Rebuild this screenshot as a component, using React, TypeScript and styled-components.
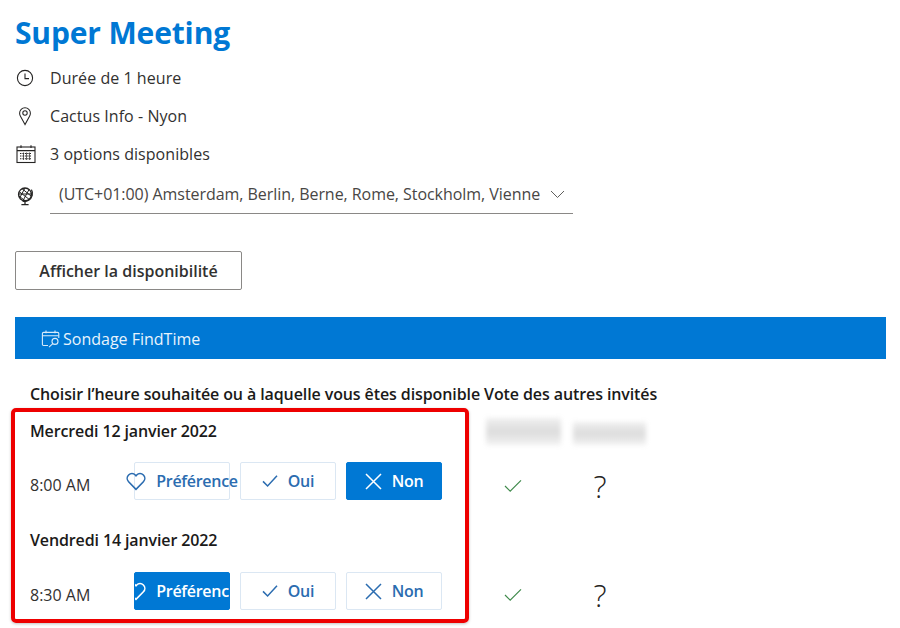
import React from "react";
import styled, { createGlobalStyle } from "styled-components";

const GlobalStyle = createGlobalStyle`
  html, body {
    margin: 0;
    padding: 0;
    background: #fff;
    font-family: "Open Sans", "Noto Sans", Arial, sans-serif;
    color: #201f1e;
  }
`;

const ClockIcon = () => (
  <svg width="18" height="18" viewBox="0 0 18 18" fill="none" stroke="#252423" strokeWidth="1.1">
    <circle cx="9" cy="9" r="7.6" />
    <path d="M9 4.5V9.6H13" />
  </svg>
);

const PinIcon = () => (
  <svg width="18" height="20" viewBox="0 0 18 20" fill="none" stroke="#252423" strokeWidth="1.05">
    <path d="M9 18.6L4.6 10.6C3.9 9.4 3.6 8.4 3.6 7.2C3.6 4.2 6 1.8 9 1.8C12 1.8 14.4 4.2 14.4 7.2C14.4 8.4 14.1 9.4 13.4 10.6Z" />
    <circle cx="9" cy="7" r="2.2" />
  </svg>
);

const CalendarIcon = () => (
  <svg width="20" height="20" viewBox="0 0 20 20" fill="none" stroke="#252423" strokeWidth="1.1">
    <rect x="1" y="3" width="18" height="15.5" />
    <path d="M1 6.6H19M5 1.2V4M15 1.2V4" />
    <path d="M4 9.5H16M4 12H16M4 14.8H16" strokeDasharray="1.4 1" />
    <path d="M7.5 8.5V16M10.5 8.5V16M13.5 8.5V16" strokeWidth=".7" />
  </svg>
);

const GlobeIcon = () => (
  <svg width="18" height="20" viewBox="0 0 18 20" fill="none" stroke="#252423" strokeWidth="1">
    <circle cx="9" cy="8.4" r="6.4" strokeWidth="1.4" />
    <path d="M3 5.5L14 14M6 2.6L15 10M2.8 10L9.5 15M9 2L3.6 12M13 3.6L7 14.6M2.6 8H15.4" />
    <path d="M15.4 3.6C17.6 7 16.4 12 12.6 14.3C10.8 15.4 8.6 15.7 6.6 15.2" strokeWidth="1.2" />
    <path d="M9 15.6V18.4M5.4 18.6H12.6" strokeWidth="1.3" />
  </svg>
);

const FindTimeIcon = () => (
  <svg width="20" height="20" viewBox="0 0 20 20" fill="none" stroke="#d9ebfa" strokeWidth="1.1">
    <path d="M7 16.5H2.6C1.9 16.5 1.4 16 1.4 15.3V4.6C1.4 3.9 1.9 3.4 2.6 3.4H16.6C17.3 3.4 17.8 3.9 17.8 4.6V9" />
    <path d="M1.4 6.8H17.8M5 1.5V4.2M14 1.5V4.2" />
    <circle cx="14" cy="12.4" r="3" />
    <path d="M11.8 14.6L8 18.2" />
  </svg>
);

const HeartIcon = () => (
  <svg width="20" height="19" viewBox="0 0 20 19" fill="none" stroke="currentColor" strokeWidth="1.6">
    <path d="M10 17.4L2.6 9.8C.7 7.8.8 4.8 2.6 3C4.5 1.2 7.5 1.2 9.3 3L10 3.8L10.7 3C12.5 1.2 15.5 1.2 17.4 3C19.2 4.8 19.3 7.8 17.4 9.8Z" />
  </svg>
);

const CheckIcon = () => (
  <svg width="16" height="14" viewBox="0 0 16 14" fill="none" stroke="currentColor" strokeWidth="1.5">
    <path d="M1 7.4L5.6 12L15 1.8" />
  </svg>
);

const CrossIcon = () => (
  <svg width="17" height="17" viewBox="0 0 17 17" fill="none" stroke="currentColor" strokeWidth="1.5">
    <path d="M1 1L16 16M16 1L1 16" />
  </svg>
);

const VoteCheckIcon = () => (
  <svg width="18" height="14" viewBox="0 0 18 14" fill="none" stroke="#3f8a4b" strokeWidth="1.2">
    <path d="M1 7L6.2 12.2L17 1.4" />
  </svg>
);

const ChevronIcon = () => (
  <svg width="15" height="9" viewBox="0 0 15 9" fill="none" stroke="#605e5c" strokeWidth="1">
    <path d="M1 1L7.5 7.5L14 1" />
  </svg>
);

const Page = styled.div`
  width: 900px;
  height: 628px;
  padding: 14px 14px 0 15px;
  box-sizing: border-box;
  overflow: hidden;
`;

const Title = styled.h1`
  margin: 0 0 7px;
  font-size: 30px;
  line-height: 38px;
  font-weight: 700;
  color: #0078d4;
  letter-spacing: -0.15px;
`;

const InfoRow = styled.div`
  display: flex;
  align-items: center;
  height: 38px;
  font-size: 16px;
  letter-spacing: 0.05px;
  color: #323130;
`;

const IconSlot = styled.span<{ $drop?: boolean }>`
  width: 35px;
  display: flex;
  align-items: center;
  flex-shrink: 0;
  padding: ${(p) => (p.$drop ? "5px" : "0")} 0 0 1px;
  box-sizing: border-box;
`;

const ZoneRow = styled.div`
  display: flex;
  align-items: center;
  height: 38px;
  margin-top: 1px;
`;

const ZoneSelect = styled.div`
  width: 523px;
  height: 38px;
  box-sizing: border-box;
  padding: 0 8px 0 9px;
  margin-top: 3px;
  border-bottom: 1px solid #8a8886;
  display: flex;
  align-items: center;
  justify-content: space-between;
  font-size: 16px;
  letter-spacing: -0.05px;
  color: #484644;
  white-space: nowrap;
`;

const AvailabilityButton = styled.button`
  display: block;
  width: 227px;
  height: 39px;
  margin-top: 39px;
  background: #fff;
  border: 1px solid #8a8886;
  border-radius: 2px;
  font-family: inherit;
  font-size: 16px;
  font-weight: 600;
  color: #323130;
`;

const PollBar = styled.div`
  width: 871px;
  height: 42px;
  margin-top: 27px;
  padding: 1px 0 0 26px;
  box-sizing: border-box;
  background: #0078d4;
  color: #e8f3fc;
  display: flex;
  align-items: center;
  gap: 2px;
  font-size: 16px;
`;

const PollHeading = styled.div`
  margin: 23px 0 0 15px;
  height: 24px;
  line-height: 24px;
  font-size: 16px;
  font-weight: 600;
  letter-spacing: -0.1px;
  color: #1b1a19;
  white-space: nowrap;
`;

const VoteGrid = styled.div`
  display: flex;
  margin: 2px 0 0 -4px;
`;

const Frame = styled.section`
  width: 458px;
  height: 215px;
  box-sizing: border-box;
  border: 4px solid #ee0000;
  border-radius: 5px;
  padding: 0 0 0 15px;
  box-shadow: 0 1px 3px rgba(0, 0, 0, 0.25);
`;

const DateHeading = styled.div<{ $first?: boolean }>`
  height: 24px;
  line-height: 24px;
  margin-top: ${(p) => (p.$first ? "7px" : "28px")};
  font-size: 16px;
  font-weight: 600;
  letter-spacing: -0.12px;
  color: #1b1a19;
`;

const SlotRow = styled.div<{ $first?: boolean }>`
  display: flex;
  align-items: flex-start;
  margin-top: ${(p) => (p.$first ? "19px" : "20px")};
`;

const SlotTime = styled.span`
  width: 104px;
  flex-shrink: 0;
  margin-top: 11px;
  line-height: 24px;
  font-size: 16px;
  color: #323130;
`;

const ChoiceGroup = styled.div`
  display: flex;
  gap: 10px;
`;

const Choice = styled.button<{ $active?: boolean; $clip?: boolean }>`
  width: 96px;
  height: 38px;
  padding: 0;
  box-sizing: border-box;
  display: flex;
  align-items: center;
  justify-content: center;
  gap: 10px;
  border-radius: 2px;
  border: 1px solid ${(p) => (p.$active ? "#0078d4" : "#dbe7f3")};
  background: ${(p) => (p.$active ? "#0078d4" : "#fff")};
  color: ${(p) => (p.$active ? "#fff" : "#2b6cb0")};
  overflow: ${(p) => (p.$clip ? "hidden" : "visible")};
  font-family: inherit;
  font-size: 16px;
  font-weight: 600;
  letter-spacing: -0.3px;
  white-space: nowrap;
  & > * {
    flex-shrink: 0;
  }
`;

const OtherVotes = styled.div`
  display: grid;
  grid-template-columns: 75px 73px;
  column-gap: 12px;
  margin-left: 17px;
  grid-template-rows: 47px 51px 39px 70px;
`;

const BlurredName = styled.div<{ $short?: boolean }>`
  height: ${(p) => (p.$short ? "23px" : "27px")};
  margin-top: ${(p) => (p.$short ? "14px" : "10px")};
  background: linear-gradient(#f0f0f0, #dcdcdc 50%, #f2f2f2);
  filter: blur(2.5px);
`;

const VoteCell = styled.div`
  align-self: end;
  width: 54px;
  height: 40px;
  display: flex;
  align-items: center;
  justify-content: center;
`;

const Maybe = styled.span`
  font-size: 31px;
  font-weight: 300;
  line-height: 40px;
  color: #252423;
`;

const slots = [
  { date: "Mercredi 12 janvier 2022", time: "8:00 AM", pick: "non" },
  { date: "Vendredi 14 janvier 2022", time: "8:30 AM", pick: "pref" },
];

export default function App() {
  return (
    <Page>
      <GlobalStyle />
      <Title>Super Meeting</Title>
      <InfoRow>
        <IconSlot>
          <ClockIcon />
        </IconSlot>
        Durée de 1 heure
      </InfoRow>
      <InfoRow>
        <IconSlot>
          <PinIcon />
        </IconSlot>
        Cactus Info - Nyon
      </InfoRow>
      <InfoRow>
        <IconSlot>
          <CalendarIcon />
        </IconSlot>
        3 options disponibles
      </InfoRow>
      <ZoneRow>
        <IconSlot $drop>
          <GlobeIcon />
        </IconSlot>
        <ZoneSelect>
          (UTC+01:00) Amsterdam, Berlin, Berne, Rome, Stockholm, Vienne
          <ChevronIcon />
        </ZoneSelect>
      </ZoneRow>
      <AvailabilityButton>Afficher la disponibilité</AvailabilityButton>
      <PollBar>
        <FindTimeIcon />
        Sondage FindTime
      </PollBar>
      <PollHeading>Choisir l’heure souhaitée ou à laquelle vous êtes disponible Vote des autres invités</PollHeading>
      <VoteGrid>
        <Frame>
          {slots.map((slot, i) => (
            <React.Fragment key={slot.time}>
              <DateHeading $first={i === 0}>{slot.date}</DateHeading>
              <SlotRow $first={i === 0}>
                <SlotTime>{slot.time}</SlotTime>
                <ChoiceGroup>
                  <Choice $active={slot.pick === "pref"} $clip={slot.pick === "pref"}>
                    <HeartIcon />
                    <span>Préférence</span>
                  </Choice>
                  <Choice>
                    <CheckIcon />
                    <span>Oui</span>
                  </Choice>
                  <Choice $active={slot.pick === "non"}>
                    <CrossIcon />
                    <span>Non</span>
                  </Choice>
                </ChoiceGroup>
              </SlotRow>
            </React.Fragment>
          ))}
        </Frame>
        <OtherVotes>
          <BlurredName />
          <BlurredName $short />
          <VoteCell>
            <VoteCheckIcon />
          </VoteCell>
          <VoteCell>
            <Maybe>?</Maybe>
          </VoteCell>
          <div />
          <div />
          <VoteCell>
            <VoteCheckIcon />
          </VoteCell>
          <VoteCell>
            <Maybe>?</Maybe>
          </VoteCell>
        </OtherVotes>
      </VoteGrid>
    </Page>
  );
}
